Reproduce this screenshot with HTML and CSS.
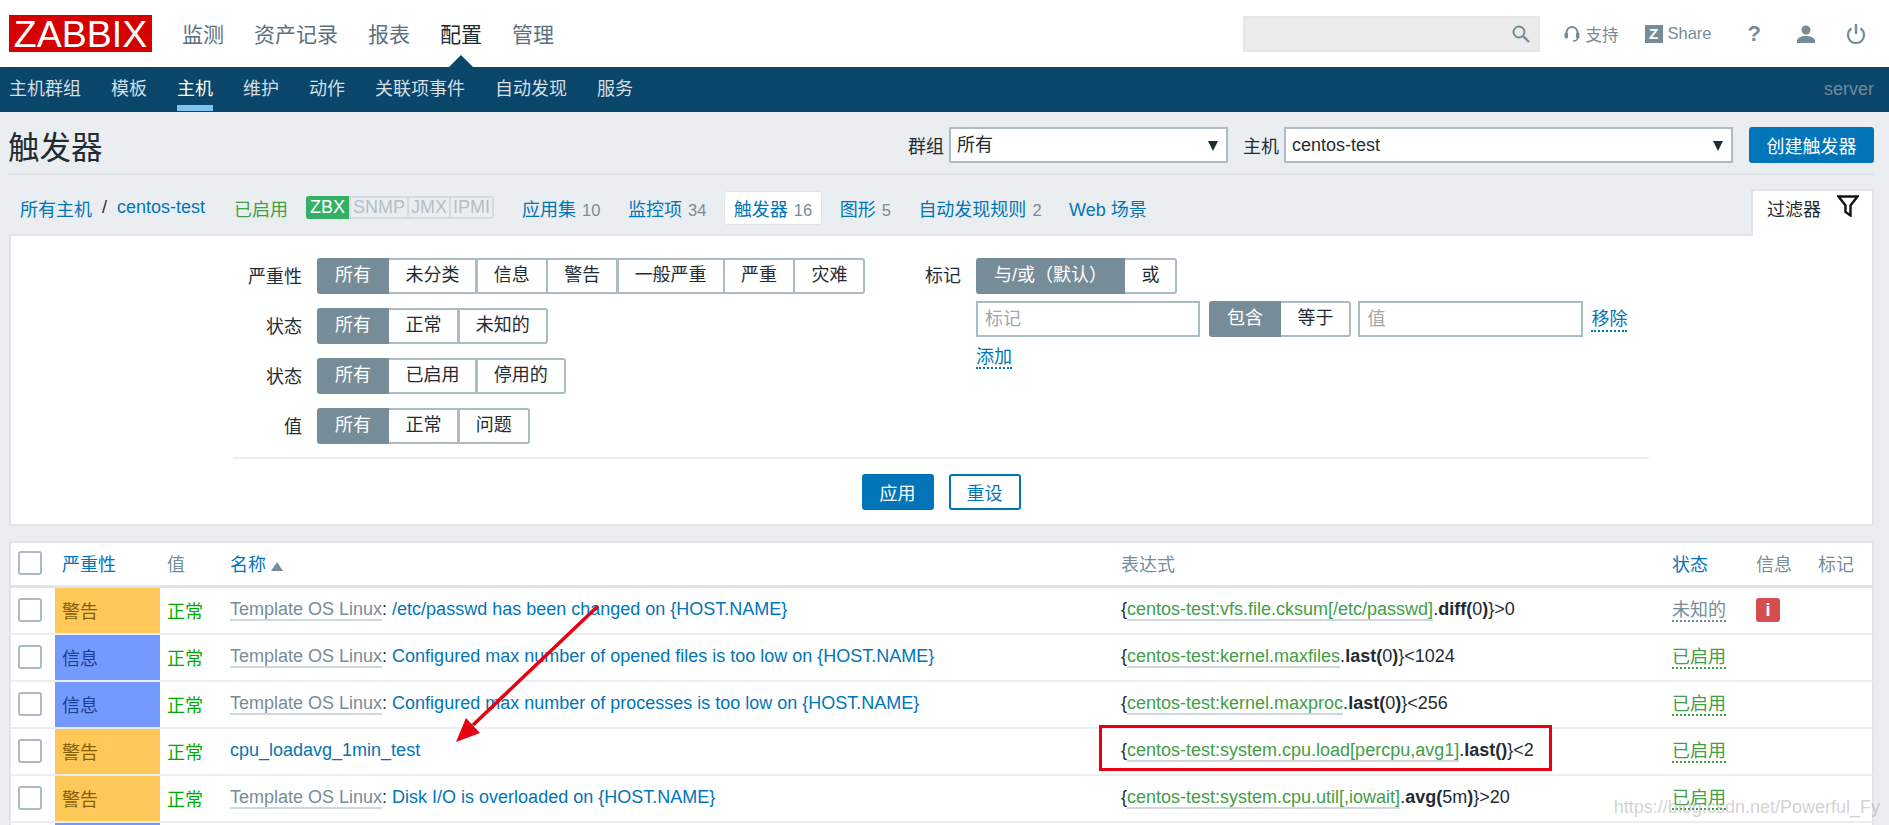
FILE: index.html
```html
<!DOCTYPE html>
<html lang="zh-CN">
<head>
    <meta charset="UTF-8">
    <title>触发器 - Zabbix</title>
    <link rel="stylesheet" href="styles.css">
</head>
<body>
    <header class="top-bar">
        <div class="logo">ZABBIX</div>
        <nav class="main-nav">
            <a href="#">监测</a>
            <a href="#">资产记录</a>
            <a href="#">报表</a>
            <a href="#" class="selected">配置</a>
            <a href="#">管理</a>
        </nav>
        <div class="search-box">
            <svg class="search-icon" viewBox="0 0 18 18" width="18" height="18"><circle cx="7" cy="7" r="5.5" fill="none" stroke="#768d99" stroke-width="2"/><path d="M11 11l6 6" stroke="#768d99" stroke-width="2.4"/></svg>
        </div>
        <div class="top-icons">
            <a href="#" class="top-link support">
                <svg viewBox="0 0 16 18" width="16" height="18"><path d="M2.5 11V7.5a5.5 5.5 0 0 1 11 0V11" fill="none" stroke="#768d99" stroke-width="2"/><rect x="0.5" y="7.5" width="3.5" height="6" rx="1.5" fill="#768d99"/><rect x="12" y="7.5" width="3.5" height="6" rx="1.5" fill="#768d99"/><path d="M13.5 13c0 2-2 3-4.500 3" fill="none" stroke="#768d99" stroke-width="1.500"/></svg>
                支持
            </a>
            <a href="#" class="top-link share"><span class="z-badge">Z</span>Share</a>
            <a href="#" class="help-link">?</a>
            <a href="#" class="icon-link user-link">
                <svg viewBox="0 0 20 18" width="20" height="18"><circle cx="10" cy="5" r="4.500" fill="#768d99"/><path d="M1 18v-2c0-3 4-5 9-5s9 2 9 5v2z" fill="#768d99"/></svg>
            </a>
            <a href="#" class="icon-link">
                <svg viewBox="0 0 20 20" width="20" height="20"><path d="M5.500 4.500a8 8 0 1 0 9 0" fill="none" stroke="#768d99" stroke-width="2.200"/><path d="M10 0v10" stroke="#768d99" stroke-width="2.400"/></svg>
            </a>
        </div>
    </header>

    <div class="sub-bar">
        <nav class="sub-nav">
            <a href="#">主机群组</a>
            <a href="#">模板</a>
            <a href="#" class="selected">主机</a>
            <a href="#">维护</a>
            <a href="#">动作</a>
            <a href="#">关联项事件</a>
            <a href="#">自动发现</a>
            <a href="#">服务</a>
        </nav>
        <span class="server-name">server</span>
    </div>

    <main class="page">
        <div class="title-row">
            <h1>触发器</h1>
            <div class="title-controls">
                <label>群组</label>
                <div class="select group-select">所有</div>
                <label>主机</label>
                <div class="select host-select">centos-test</div>
                <button class="btn-primary create-btn">创建触发器</button>
            </div>
        </div>

        <div class="crumb-row">
            <a href="#" class="crumb">所有主机</a>
            <span class="crumb-sep">/</span>
            <a href="#" class="crumb">centos-test</a>
            <span class="host-status">已启用</span>
            <div class="avail-tags">
                <span class="tag on">ZBX</span><span class="tag">SNMP</span><span class="tag">JMX</span><span class="tag">IPMI</span>
            </div>
            <div class="host-links">
                <a href="#">应用集<sup>10</sup></a>
                <a href="#">监控项<sup>34</sup></a>
                <a href="#" class="selected">触发器<sup>16</sup></a>
                <a href="#">图形<sup>5</sup></a>
                <a href="#">自动发现规则<sup>2</sup></a>
                <a href="#">Web 场景</a>
            </div>
            <div class="filter-tab">
                过滤器
                <svg viewBox="0 0 22 22" width="22" height="22"><path d="M1.500 1.500h19L13.500 10.500v10l-5-3.500v-6.500z" fill="none" stroke="#111" stroke-width="2.400"/></svg>
            </div>
        </div>

        <section class="filter-box">
            <div class="filter-cols">
                <div class="filter-left">
                    <div class="filter-row">
                        <label>严重性</label>
                        <div class="seg">
                            <span class="on">所有</span><span>未分类</span><span>信息</span><span>警告</span><span>一般严重</span><span>严重</span><span>灾难</span>
                        </div>
                    </div>
                    <div class="filter-row">
                        <label>状态</label>
                        <div class="seg"><span class="on">所有</span><span>正常</span><span>未知的</span></div>
                    </div>
                    <div class="filter-row">
                        <label>状态</label>
                        <div class="seg"><span class="on">所有</span><span>已启用</span><span>停用的</span></div>
                    </div>
                    <div class="filter-row">
                        <label>值</label>
                        <div class="seg"><span class="on">所有</span><span>正常</span><span>问题</span></div>
                    </div>
                </div>
                <div class="filter-right">
                    <label>标记</label>
                    <div class="tag-fields">
                        <div class="seg"><span class="on">与/或（默认）</span><span>或</span></div>
                        <div class="tag-line">
                            <input type="text" placeholder="标记">
                            <div class="seg"><span class="on">包含</span><span>等于</span></div>
                            <input type="text" placeholder="值" class="tag-value">
                            <a href="#" class="dotted-link">移除</a>
                        </div>
                        <div class="add-line"><a href="#" class="dotted-link">添加</a></div>
                    </div>
                </div>
            </div>
            <div class="filter-actions">
                <button class="btn-primary">应用</button>
                <button class="btn-alt">重设</button>
            </div>
        </section>

        <section class="list-box">
            <table class="trigger-table">
                <colgroup>
                    <col class="c-check"><col class="c-sev"><col class="c-val"><col class="c-name"><col class="c-expr"><col class="c-status"><col class="c-info"><col class="c-tags">
                </colgroup>
                <thead>
                    <tr>
                        <th><span class="check"></span></th>
                        <th><a href="#">严重性</a></th>
                        <th>值</th>
                        <th><a href="#">名称</a><span class="sort-up"></span></th>
                        <th>表达式</th>
                        <th><a href="#">状态</a></th>
                        <th>信息</th>
                        <th>标记</th>
                    </tr>
                </thead>
                <tbody>
                    <tr>
                        <td><span class="check"></span></td>
                        <td class="sev-warning">警告</td>
                        <td class="ok">正常</td>
                        <td><a href="#" class="tpl">Template OS Linux</a>: <a href="#">/etc/passwd has been changed on {HOST.NAME}</a></td>
                        <td>{<a href="#" class="item">centos-test:vfs.file.cksum[/etc/passwd]</a>.<b>diff(</b>0<b>)</b>}&gt;0</td>
                        <td><a href="#" class="st-unknown">未知的</a></td>
                        <td><span class="info-icon">i</span></td>
                        <td></td>
                    </tr>
                    <tr>
                        <td><span class="check"></span></td>
                        <td class="sev-info">信息</td>
                        <td class="ok">正常</td>
                        <td><a href="#" class="tpl">Template OS Linux</a>: <a href="#">Configured max number of opened files is too low on {HOST.NAME}</a></td>
                        <td>{<a href="#" class="item">centos-test:kernel.maxfiles</a>.<b>last(</b>0<b>)</b>}&lt;1024</td>
                        <td><a href="#" class="st-on">已启用</a></td>
                        <td></td>
                        <td></td>
                    </tr>
                    <tr>
                        <td><span class="check"></span></td>
                        <td class="sev-info">信息</td>
                        <td class="ok">正常</td>
                        <td><a href="#" class="tpl">Template OS Linux</a>: <a href="#">Configured max number of processes is too low on {HOST.NAME}</a></td>
                        <td>{<a href="#" class="item">centos-test:kernel.maxproc</a>.<b>last(</b>0<b>)</b>}&lt;256</td>
                        <td><a href="#" class="st-on">已启用</a></td>
                        <td></td>
                        <td></td>
                    </tr>
                    <tr>
                        <td><span class="check"></span></td>
                        <td class="sev-warning">警告</td>
                        <td class="ok">正常</td>
                        <td><a href="#">cpu_loadavg_1min_test</a></td>
                        <td>{<a href="#" class="item">centos-test:system.cpu.load[percpu,avg1]</a>.<b>last()</b>}&lt;2</td>
                        <td><a href="#" class="st-on">已启用</a></td>
                        <td></td>
                        <td></td>
                    </tr>
                    <tr>
                        <td><span class="check"></span></td>
                        <td class="sev-warning">警告</td>
                        <td class="ok">正常</td>
                        <td><a href="#" class="tpl">Template OS Linux</a>: <a href="#">Disk I/O is overloaded on {HOST.NAME}</a></td>
                        <td>{<a href="#" class="item">centos-test:system.cpu.util[,iowait]</a>.<b>avg(</b>5m<b>)</b>}&gt;20</td>
                        <td><a href="#" class="st-on">已启用</a></td>
                        <td></td>
                        <td></td>
                    </tr>
                    <tr>
                        <td></td>
                        <td class="sev-info"></td>
                        <td></td>
                        <td></td>
                        <td></td>
                        <td></td>
                        <td></td>
                        <td></td>
                    </tr>
                </tbody>
            </table>
        </section>
    </main>

    <!-- screenshot annotations -->
    <div class="mark-box"></div>
    <svg class="mark-arrow" viewBox="0 0 1889 825" width="1889" height="825">
        <path d="M598 606L473 725" stroke="#e60012" stroke-width="3.500"/>
        <path d="M456 742L466 718L480 733z" fill="#e60012"/>
    </svg>
    <div class="watermark">https://blog.csdn.net/Powerful_Fy</div>
</body>
</html>
```

FILE: styles.css
```css
html,
body {
    margin: 0;
    height: 825px;
    overflow: hidden;
}

body {
    position: relative;
    background-color: #ebeef0;
    color: #1f2c33;
    font-family: "Liberation Sans", "Noto Sans CJK SC", sans-serif;
    font-size: 18px;
}

a {
    color: #0275b8;
    text-decoration: none;
}

/* top header */
.top-bar {
    display: flex;
    align-items: center;
    height: 67px;
    background-color: #fff;
}

.logo {
    width: 143px;
    height: 37px;
    margin-left: 9px;
    background-color: #d40000;
    color: #fff;
    font-size: 37.5px;
    line-height: 38px;
    text-align: center;
}

.main-nav {
    display: flex;
    gap: 30px;
    margin-left: 30px;
    margin-top: -2px;
    font-size: 21px;
}

.main-nav a {
    position: relative;
    color: #5b7180;
}

.main-nav a.selected {
    color: #1f2c33;
}

.main-nav a.selected::after {
    content: "";
    position: absolute;
    left: 8px;
    bottom: -20px;
    border-left: 13px solid transparent;
    border-right: 13px solid transparent;
    border-bottom: 13px solid #0a466a;
}

.search-box {
    display: flex;
    align-items: center;
    justify-content: flex-end;
    box-sizing: border-box;
    width: 297px;
    height: 36px;
    margin-left: auto;
    padding-right: 8px;
    background-color: #ebebeb;
    border: 2px solid #e6e6e6;
}

.top-icons {
    display: flex;
    align-items: center;
    margin-left: 24px;
    margin-right: 23px;
    height: 30px;
}

.top-link {
    display: flex;
    align-items: center;
    gap: 6px;
    color: #768d99;
    font-size: 16.500px;
}

.share {
    margin-left: 26px;
    gap: 5px;
}

.z-badge {
    width: 18px;
    height: 18px;
    background-color: #768d99;
    color: #fff;
    font-size: 15px;
    font-weight: bold;
    line-height: 18px;
    text-align: center;
}

.help-link {
    margin-left: 36px;
    color: #768d99;
    font-size: 22px;
    font-weight: bold;
}

.icon-link {
    display: flex;
    margin-left: 30px;
}

.user-link {
    margin-left: 35px;
}

/* second level nav */
.sub-bar {
    display: flex;
    justify-content: space-between;
    align-items: center;
    height: 45px;
    padding: 0 15px 0 9px;
    background-color: #0a466a;
}

.sub-nav {
    display: flex;
    gap: 30px;
}

.sub-nav a {
    position: relative;
    color: #d5dfe5;
    line-height: 45px;
}

.sub-nav a.selected {
    color: #fff;
}

.sub-nav a.selected::after {
    content: "";
    position: absolute;
    left: 0;
    right: 0;
    bottom: 1px;
    height: 6px;
    background-color: #7fc4f0;
}

.server-name {
    color: #6f8a99;
}

/* page */
.page {
    height: 713px;
    overflow: hidden;
    padding: 0 15px 0 9px;
}

.title-row {
    display: flex;
    justify-content: space-between;
    align-items: center;
    height: 56px;
    padding-top: 5px;
    border-bottom: 2px solid #dfe4e7;
}

.title-row h1 {
    margin: 0;
    font-size: 31.500px;
    font-weight: normal;
    margin-left: -1px;
}

.title-controls {
    display: flex;
    align-items: center;
    gap: 5px;
}

.select {
    position: relative;
    height: 36px;
    box-sizing: border-box;
    padding-left: 6px;
    background-color: #fff;
    border: 2px solid #acbbc2;
    line-height: 33px;
}

.select::after {
    content: "";
    position: absolute;
    right: 8px;
    top: 12px;
    border-left: 5px solid transparent;
    border-right: 5px solid transparent;
    border-top: 10px solid #1f2c33;
}

.group-select {
    width: 279px;
    margin-right: 10px;
}

.host-select {
    width: 449px;
}

.btn-primary,
.btn-alt {
    height: 36px;
    width: 72px;
    padding: 0;
    box-sizing: border-box;
    border-radius: 3px;
    border: 2px solid #0275b8;
    font-family: inherit;
    font-size: 18px;
}

.btn-primary {
    background-color: #0275b8;
    color: #fff;
}

.btn-alt {
    background-color: #fff;
    color: #0275b8;
}

.create-btn {
    width: 125px;
    margin-left: 11px;
}

.crumb-row {
    display: flex;
    align-items: center;
    height: 37px;
    margin-top: 14px;
    padding: 0 0 8px 11px;
    position: relative;
}

.crumb-sep {
    margin: 0 10px;
    color: #1f2c33;
}

.host-status {
    margin-left: 29px;
    color: #429e47;
}

.avail-tags {
    display: flex;
    margin-left: 18px;
    height: 23px;
    box-sizing: border-box;
    border: 2px solid #d5dce0;
    border-radius: 3px;
    background-color: #ebeef0;
}

.tag {
    padding: 0 2px;
    border-left: 2px solid #d5dce0;
    color: #b3c0c8;
    line-height: 19px;
}

.tag.on {
    margin: -2px 0 -2px -2px;
    padding: 0 4px;
    border-left: none;
    background-color: #34af67;
    border-radius: 3px 0 0 3px;
    color: #fff;
    line-height: 23px;
}

.host-links {
    display: flex;
    gap: 7.500px;
    margin-left: 18px;
}

.host-links a {
    padding: 3px 9px;
    border: 1px solid transparent;
    border-radius: 3px;
}

.host-links a.selected {
    background-color: #fff;
    border-color: #dfe4e7;
}

.host-links sup {
    margin-left: 6px;
    color: #768d99;
    font-size: 16.500px;
    vertical-align: baseline;
}

.filter-tab {
    position: absolute;
    right: 0;
    top: 0;
    z-index: 1;
    display: flex;
    gap: 16px;
    align-items: flex-start;
    width: 123px;
    height: 47px;
    box-sizing: border-box;
    padding: 4px 0 0 14px;
    background-color: #fff;
    border: 2px solid #dfe4e7;
    border-bottom: none;
}

.filter-box {
    box-sizing: border-box;
    height: 292px;
    padding: 22px 223px 0 222px;
    background-color: #fff;
    border: 2px solid #dfe4e7;
}

.filter-cols {
    display: flex;
    height: 199px;
    border-bottom: 2px solid #ebeef0;
}

.filter-left {
    display: flex;
    flex-direction: column;
    gap: 14px;
    width: 692px;
}

.filter-row {
    display: flex;
    align-items: center;
    gap: 15px;
}

.filter-row label {
    width: 69px;
    margin-top: -2px;
    text-align: right;
}

.filter-right {
    display: flex;
    align-items: flex-start;
    gap: 15px;
}

.filter-right > label {
    line-height: 36px;
}

.tag-fields {
    display: flex;
    flex-direction: column;
    align-items: flex-start;
    gap: 7px;
}

.tag-line {
    display: flex;
    align-items: center;
    gap: 9px;
}

.tag-line input {
    width: 224px;
    height: 36px;
    box-sizing: border-box;
    padding: 0 7px;
    border: 2px solid #acbbc2;
    font-family: inherit;
    font-size: 18px;
}

.tag-line .tag-value {
    width: 225px;
    margin-left: -2px;
    margin-right: -1px;
}

.tag-line input::placeholder {
    color: #a5a5a5;
}

.seg {
    display: flex;
}

.seg span {
    height: 36px;
    box-sizing: border-box;
    padding: 0 16px;
    margin-left: -1.6px;
    background-color: #fff;
    border: 2px solid #acbbc2;
    line-height: 30px;
    white-space: nowrap;
}

.seg span:first-child {
    margin-left: 0;
    border-radius: 3px 0 0 3px;
}

.seg span:last-child {
    border-radius: 0 3px 3px 0;
}

.seg span.on {
    position: relative;
    background-color: #768d99;
    border-color: #768d99;
    color: #fff;
}

.dotted-link {
    position: relative;
    top: 1px;
    border-bottom: 2px dotted #0275b8;
    line-height: 22px;
}

.add-line {
    margin-top: 1px;
}

.filter-actions {
    display: flex;
    justify-content: center;
    gap: 15px;
    margin-top: 15px;
}

/* list */
.list-box {
    margin-top: 15px;
    background-color: #fff;
    border: 2px solid #dfe4e7;
    border-bottom: none;
}

.trigger-table {
    width: 100%;
    table-layout: fixed;
    border-collapse: separate;
    border-spacing: 0;
}

.c-check { width: 44px; }
.c-sev { width: 105px; }
.c-val { width: 63px; }
.c-name { width: 891px; }
.c-expr { width: 551px; }
.c-status { width: 84px; }
.c-info { width: 62px; }
.c-tags { width: 62px; }

.trigger-table th {
    box-sizing: border-box;
    height: 45px;
    padding: 0 0 3px 7px;
    border-bottom: 3px solid #dfe4e7;
    color: #768d99;
    font-weight: normal;
    text-align: left;
}

.trigger-table td {
    box-sizing: border-box;
    height: 47px;
    padding: 0 0 2px 7px;
    border-bottom: 2px solid #ebeef0;
    white-space: nowrap;
}

.check {
    display: block;
    width: 24px;
    height: 24px;
    box-sizing: border-box;
    background-color: #fff;
    border: 2px solid #acbbc2;
    border-radius: 3px;
}

.sort-up {
    display: inline-block;
    margin-left: 5px;
    border-left: 6px solid transparent;
    border-right: 6px solid transparent;
    border-bottom: 9px solid #768d99;
}

.trigger-table td.sev-warning {
    background-color: #ffc859;
    color: #855d00;
}

.trigger-table td.sev-info {
    background-color: #7499ff;
    color: #1c3f96;
}

.ok {
    color: #00aa00;
}

.tpl {
    color: #768d99;
    border-bottom: 2px solid #cfd7dc;
}

.item {
    color: #429e47;
    border-bottom: 2px solid #cfd7dc;
}

.trigger-table b {
    font-weight: bold;
}

.st-on,
.st-unknown {
    position: relative;
    top: -2px;
}

.st-on {
    color: #429e47;
    border-bottom: 2px dotted #429e47;
}

.st-unknown {
    color: #768d99;
    border-bottom: 2px dotted #768d99;
}

.info-icon {
    display: block;
    width: 24px;
    height: 24px;
    background-color: #d64e4e;
    border-radius: 3px;
    color: #fff;
    font-weight: bold;
    line-height: 24px;
    text-align: center;
}

/* annotations on top of the screenshot */
.mark-box {
    position: absolute;
    left: 1099px;
    top: 725px;
    width: 447px;
    height: 40px;
    border: 3px solid #e60012;
}

.mark-arrow {
    position: absolute;
    left: 0;
    top: 0;
    pointer-events: none;
}

.watermark {
    position: absolute;
    right: 9px;
    top: 797px;
    color: rgba(165, 165, 165, 0.5);
    font-size: 18px;
}
```
